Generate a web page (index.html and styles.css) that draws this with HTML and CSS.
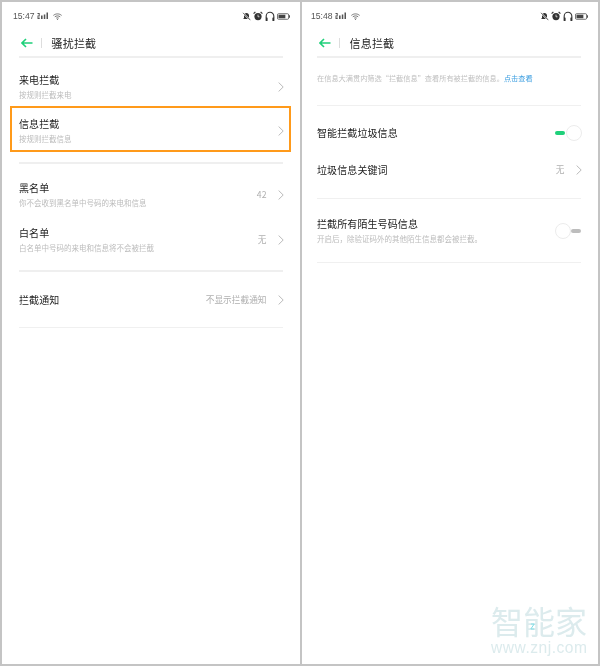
FILE: index.html
```html
<!DOCTYPE html>
<html lang="zh-CN">
<head>
<meta charset="utf-8">
<title>信息拦截</title>
<link rel="stylesheet" href="styles.css">
</head>
<body>
<svg class="defs" width="0" height="0" aria-hidden="true">
  <defs>
    <symbol id="chev" viewBox="0 0 6 10"><path d="M.6.5 5.2 5 .6 9.5" fill="none" stroke="currentColor" stroke-width="1"/></symbol>
    <symbol id="back" viewBox="0 0 12 10"><path d="M11.5 5H1.2M5 1 1 5l4 4" fill="none" stroke="currentColor" stroke-width="1.6"/></symbol>
    <symbol id="sig" viewBox="0 0 12 8"><path d="M.5 7h2.2V5.6H1.2V4.4h1.5V1H.5v1h1.2v1.4H.5zM4 7h1.6V3.5H4zM6.8 7h1.5V2.4H6.8zM9.5 7H11V.6H9.5z" fill="currentColor"/></symbol>
    <symbol id="wifi" viewBox="0 0 9 7"><path d="M.4 2.4C2.8.4 6.2.4 8.6 2.4M1.8 3.8C3.4 2.6 5.6 2.6 7.2 3.8M3.2 5.2c.8-.5 1.8-.5 2.6 0" fill="none" stroke="currentColor" stroke-width=".9"/><circle cx="4.5" cy="6.3" r=".6" fill="currentColor"/></symbol>
    <symbol id="bell" viewBox="0 0 9 9"><path d="M4.5 1C3 1 2 2.2 2 3.6V6L1 7h7L7 6V3.6C7 2.2 6 1 4.5 1z" fill="currentColor"/><path d="M1 1l7.4 7.4" stroke="#fff" stroke-width="1.5"/><path d="M1 .8l7.4 7.4" stroke="currentColor" stroke-width=".8"/></symbol>
    <symbol id="alarm" viewBox="0 0 10 10"><circle cx="5" cy="5.6" r="3.6" fill="currentColor"/><path d="M.6 2.6 2.4.8M9.4 2.6 7.6.8" stroke="currentColor" stroke-width="1.2"/><path d="M5 3.6v2.2h1.5" fill="none" stroke="#fff" stroke-width=".7"/></symbol>
    <symbol id="phones" viewBox="0 0 10 11"><path d="M1.2 7V5a3.8 3.8 0 0 1 7.6 0v2" fill="none" stroke="currentColor" stroke-width="1.1"/><rect x=".6" y="6.4" width="2" height="3.6" rx=".6" fill="currentColor"/><rect x="7.4" y="6.4" width="2" height="3.6" rx=".6" fill="currentColor"/></symbol>
    <symbol id="batt" viewBox="0 0 14 7"><rect x=".5" y=".5" width="12" height="6" rx="1.2" fill="none" stroke="currentColor" stroke-width=".8"/><rect x="1.6" y="1.6" width="7.4" height="3.8" fill="currentColor"/><rect x="13" y="2.2" width="1" height="2.6" fill="currentColor"/></symbol>
  </defs>
</svg>

<main class="frame">
  <section class="panel panel-left">
    <div class="status">
      <span class="time">15:47</span>
      <svg class="i-sig"><use href="#sig"/></svg>
      <svg class="i-wifi"><use href="#wifi"/></svg>
      <span class="status-right">
        <svg class="i-bell"><use href="#bell"/></svg>
        <svg class="i-alarm"><use href="#alarm"/></svg>
        <svg class="i-phones"><use href="#phones"/></svg>
        <svg class="i-batt"><use href="#batt"/></svg>
      </span>
    </div>
    <header class="head">
      <svg class="i-back"><use href="#back"/></svg>
      <span class="head-sep"></span>
      <h1 class="head-title">骚扰拦截</h1>
    </header>
    <div class="rule"></div>

    <div class="row row-first">
      <div class="texts"><div class="t">来电拦截</div><div class="s">按规则拦截来电</div></div>
      <svg class="chev"><use href="#chev"/></svg>
    </div>
    <div class="row row-hl">
      <div class="texts"><div class="t">信息拦截</div><div class="s">按规则拦截信息</div></div>
      <svg class="chev"><use href="#chev"/></svg>
    </div>
    <div class="rule rule-a"></div>

    <div class="row row-list">
      <div class="texts"><div class="t">黑名单</div><div class="s">你不会收到黑名单中号码的来电和信息</div></div>
      <span class="val">42</span>
      <svg class="chev"><use href="#chev"/></svg>
    </div>
    <div class="row row-list">
      <div class="texts"><div class="t">白名单</div><div class="s">白名单中号码的来电和信息将不会被拦截</div></div>
      <span class="val">无</span>
      <svg class="chev"><use href="#chev"/></svg>
    </div>
    <div class="rule rule-b"></div>

    <div class="row row-single">
      <div class="texts"><div class="t">拦截通知</div></div>
      <span class="val">不显示拦截通知</span>
      <svg class="chev"><use href="#chev"/></svg>
    </div>
    <div class="rule-thin"></div>
  </section>

  <section class="panel panel-right">
    <div class="status">
      <span class="time">15:48</span>
      <svg class="i-sig"><use href="#sig"/></svg>
      <svg class="i-wifi"><use href="#wifi"/></svg>
      <span class="status-right">
        <svg class="i-bell"><use href="#bell"/></svg>
        <svg class="i-alarm"><use href="#alarm"/></svg>
        <svg class="i-phones"><use href="#phones"/></svg>
        <svg class="i-batt"><use href="#batt"/></svg>
      </span>
    </div>
    <header class="head">
      <svg class="i-back"><use href="#back"/></svg>
      <span class="head-sep"></span>
      <h1 class="head-title">信息拦截</h1>
    </header>
    <div class="rule"></div>

    <p class="note">在信息大满贯内筛选“拦截信息”查看所有被拦截的信息。<a class="link">点击查看</a></p>
    <div class="rule-thin"></div>

    <div class="group">
      <div class="row row-plain">
        <div class="t">智能拦截垃圾信息</div>
        <span class="toggle toggle-on"><i class="track"></i><i class="knob"></i></span>
      </div>
      <div class="row row-plain">
        <div class="t">垃圾信息关键词</div>
        <span class="val">无</span>
        <svg class="chev"><use href="#chev"/></svg>
      </div>
    </div>
    <div class="rule-thin"></div>

    <div class="row row-two">
      <div class="texts"><div class="t">拦截所有陌生号码信息</div><div class="s">开启后，除验证码外的其他陌生信息都会被拦截。</div></div>
      <span class="toggle toggle-off"><i class="knob"></i><i class="track"></i></span>
    </div>
    <div class="rule-thin"></div>
  </section>

  <div class="mark">
    <div class="mark-cn">智能家</div>
    <div class="mark-url">www.znj.com</div>
    <svg class="mark-z" viewBox="0 0 5 7"><path d="M.8 1h3.4L.8 6h3.4" fill="none" stroke="currentColor" stroke-width="1"/></svg>
  </div>
</main>
</body>
</html>
```

FILE: styles.css
```css
* { box-sizing: border-box; }

html, body { margin: 0; padding: 0; background: #fff; }

.defs { position: absolute; }

.frame {
  position: relative;
  display: flex;
  width: 600px;
  height: 666px;
  background: #c4c4c4;
  padding: 2px;
  gap: 2px;
  overflow: hidden;
  font-family: "Noto Sans CJK SC", "Noto Sans", sans-serif;
  filter: blur(0.5px);
}

.panel { background: #fff; height: 662px; flex: none; }
.panel-left { width: 298px; padding: 0 17px; }
.panel-right { width: 296px; padding: 0 17px 0 15px; }

.status {
  display: flex;
  align-items: center;
  height: 28px;
  margin-left: -6px;
}
.time { font-family: "Liberation Sans", sans-serif; font-size: 8.6px; line-height: 10px; color: #555; width: 24px; }
.i-sig { width: 12px; height: 8px; color: #555; }
.i-wifi { width: 9px; height: 7px; margin-left: 4px; color: #666; }
.status-right { display: flex; align-items: center; gap: 2px; margin-left: auto; margin-right: -7px; }
.i-bell { width: 9px; height: 9px; color: #333; }
.i-alarm { width: 10px; height: 10px; color: #333; }
.i-phones { width: 10px; height: 11px; color: #333; }
.i-batt { width: 13px; height: 7px; color: #444; }

.head { display: flex; align-items: center; height: 26px; }
.i-back { width: 12px; height: 10px; margin-left: 2px; color: #1fd07a; }
.head-sep { width: 1px; height: 10px; background: #ddd; margin: 0 9.5px 0 8px; }
.head-title { margin: 0; font-size: 11px; line-height: 14px; font-weight: 400; color: #222; letter-spacing: 0.2px; }

.rule { height: 2px; background: #efefef; }
.rule-a { margin-top: 10px; }
.rule-b { margin-top: 16px; }
.rule-thin { height: 1px; background: #f0f0f0; }

.row { display: flex; align-items: center; }
.texts { flex: 1 1 auto; min-width: 0; }
.t { font-size: 10px; line-height: 14px; color: #222; letter-spacing: 0.1px; }
.s { font-size: 7.5px; line-height: 12px; margin-top: 2px; color: #bcbcbc; white-space: nowrap; }
.val { font-size: 8.7px; line-height: 12px; color: #b0b0b0; margin-right: 11px; }
.chev { width: 6px; height: 10px; color: #bbb; flex: none; margin-right: -0.5px; }

.row-first { padding: 15px 0 5px; }
.row-hl {
  margin: 0 -8px 0 -9px;
  padding: 9px 6px 5px 7px;
  border: 2px solid #ff9a1a;
}
.row-list { height: 45px; padding-top: 17px; }
.row-single { height: 55px; }

.note { margin: 0; height: 47px; padding-top: 14px; font-size: 7.2px; line-height: 12px; color: #c0c0c0; white-space: nowrap; }
.link { color: #3d9fe0; }

.group { padding: 8.5px 0 9.5px; }
.row-plain { height: 37px; }
.row-plain .t { flex: 1 1 auto; }
.row-two { padding: 18px 0 17px; }

.toggle { flex: none; display: flex; align-items: center; height: 16px; }
.track { display: block; width: 10px; height: 3.5px; border-radius: 2px; }
.knob { display: block; width: 16px; height: 16px; border-radius: 50%; background: #fff; border: 1px solid #ececec; }
.toggle-on { gap: 1px; margin-right: -1px; }
.toggle-on .track { background: #1fd07a; }
.toggle-off .track { background: #bdbdbd; }

.mark { position: absolute; left: 491px; top: 600px; width: 100px; color: #dcebed; }
.mark-cn { font-size: 32px; line-height: 40px; font-weight: 400; white-space: nowrap; }
.mark-url { font-family: "Liberation Sans", sans-serif; font-size: 15.6px; line-height: 16px; letter-spacing: 0.5px; white-space: nowrap; }
.mark-z { position: absolute; left: 39px; top: 23px; width: 5px; height: 7px; color: #7fdde6; }
```
